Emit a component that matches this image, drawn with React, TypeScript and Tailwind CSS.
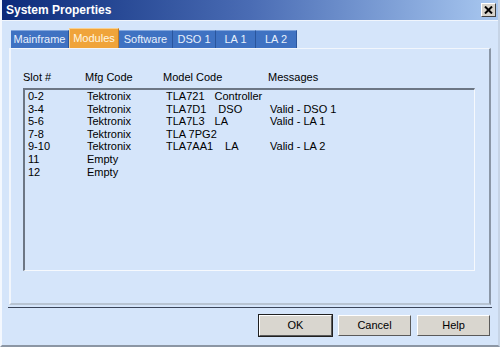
import React from 'react'

function App() {
  const tabs = [
    { t: 'Mainframe', w: 'w-[58px]' },
    { t: 'Modules', w: 'w-[50px]' },
    { t: 'Software', w: 'w-[54px]' },
    { t: 'DSO 1', w: 'w-[43px]' },
    { t: 'LA 1', w: 'w-[40px]' },
    { t: 'LA 2', w: 'w-[41px]' },
  ]
  const rows = [
    { slot: '0-2', mfg: 'Tektronix', model: 'TLA721', type: 'Controller', typeX: 'pl-[10px]', msg: '' },
    { slot: '3-4', mfg: 'Tektronix', model: 'TLA7D1', type: 'DSO', typeX: 'pl-[12px]', msg: 'Valid - DSO 1' },
    { slot: '5-6', mfg: 'Tektronix', model: 'TLA7L3', type: 'LA', typeX: 'pl-[10px]', msg: 'Valid - LA 1' },
    { slot: '7-8', mfg: 'Tektronix', model: 'TLA 7PG2', type: '', typeX: '', msg: '' },
    { slot: '9-10', mfg: 'Tektronix', model: 'TLA7AA1', type: 'LA', typeX: 'pl-[12px]', msg: 'Valid - LA 2' },
    { slot: '11', mfg: 'Empty', model: '', type: '', typeX: '', msg: '' },
    { slot: '12', mfg: 'Empty', model: '', type: '', typeX: '', msg: '' },
  ]
  return (
    <div className="w-[500px] h-[347px] bg-[#d5e5fa] flex flex-col border-l-2 border-l-[#f4f8fe] border-r-2 border-r-[#c6d4e6] border-b-2 border-b-[#8c96a4] overflow-hidden text-black" style={{ fontFamily: '"Liberation Sans", Arial, sans-serif' }}>
      {/* title bar */}
      <div className="h-[20px] shrink-0 flex items-center justify-between pl-[4px] pr-[2px] bg-gradient-to-r from-[#0c2a7a] via-[#4a6cb4] to-[#a9c8f0]">
        <span className="text-white font-bold text-[12px] leading-none">System Properties</span>
        <div className="w-[15px] h-[14px] bg-[#d8d4cc] border border-t-white border-l-white border-r-[#404040] border-b-[#404040] flex items-center justify-center">
          <svg width="9" height="8" viewBox="0 0 9 8">
            <path d="M1 0.5 L8 7.5 M8 0.5 L1 7.5" stroke="#000" strokeWidth="2" />
          </svg>
        </div>
      </div>
      <div className="h-px bg-[#f0f5fc] shrink-0" />

      {/* tabs */}
      <div className="flex pl-[9px] mt-[7px] h-[20px] shrink-0">
        {tabs.map(({ t, w }) => (
          <div
            key={t}
            className={
              t === 'Modules'
                ? w + ' h-[20px] flex items-center justify-center text-[11px] text-[#fff7e0] bg-[#f0a43a] border-t border-l border-[#f8d090] border-r border-r-[#b87828]'
                : w + ' h-[18px] mt-[2px] flex items-center justify-center text-[11px] text-[#e8f0fc] bg-[#3f72c2] border-r border-r-[#2a559c] border-t border-t-[#7fa4dc]'
            }
          >
            {t}
          </div>
        ))}
      </div>

      {/* tab panel */}
      <div className="mx-[7px] h-[257px] shrink-0 border-l-2 border-l-[#f2f6fc] border-t border-t-[#f2f6fc] border-r-2 border-r-[#8a96a6] border-b-2 border-b-[#b8c4d2] flex flex-col pl-[12px] pr-[14px]">
        <div className="flex text-[11px] mt-[21px] h-[14px] items-center">
          <span className="w-[62px]">Slot #</span>
          <span className="w-[78px]">Mfg Code</span>
          <span className="w-[105px]">Model Code</span>
          <span>Messages</span>
        </div>
        <div className="mt-[4px] h-[183px] border-t-2 border-l-2 border-t-[#6c7684] border-l-[#6c7684] border-r border-b border-r-[#f6f9fd] border-b-[#f6f9fd] pl-[3px] flex flex-col">
          {rows.map((r) => (
            <div key={r.slot} className="flex text-[11px] leading-[12.6px]">
              <span className="w-[59px]">{r.slot}</span>
              <span className="w-[79px]">{r.mfg}</span>
              <span className="w-[104px] flex">
                <span>{r.model}</span>
                {r.type && <span className={r.typeX}>{r.type}</span>}
              </span>
              <span>{r.msg}</span>
            </div>
          ))}
        </div>
      </div>

      <div className="mx-[6px] mt-[2px] h-px bg-[#3a4458] shrink-0" />

      {/* buttons */}
      <div className="flex justify-end gap-[6px] pr-[8px] mt-[7px]">
        {['OK', 'Cancel', 'Help'].map((b) => (
          <div
            key={b}
            className={
              'w-[73px] h-[21px] flex items-center justify-center text-[11px] bg-[#d9d6cf] border border-t-white border-l-white border-r-[#5a5a5a] border-b-[#5a5a5a] ' +
              (b === 'OK' ? 'outline outline-1 outline-[#202020]' : '')
            }
          >
            {b}
          </div>
        ))}
      </div>
    </div>
  )
}

export default App
